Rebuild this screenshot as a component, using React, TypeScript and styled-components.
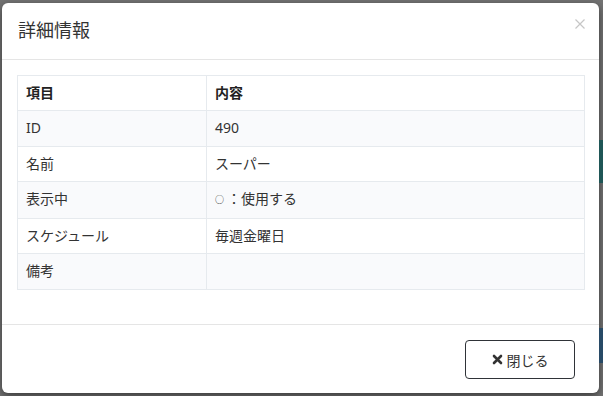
import styled, { createGlobalStyle } from 'styled-components'

const GlobalStyle = createGlobalStyle`
  html, body {
    margin: 0;
    padding: 0;
    background: #737373;
  }
  body {
    font-family: 'Noto Sans', 'Noto Sans CJK JP', sans-serif;
    font-size: 14px;
    color: #333;
  }
`

const Backdrop = styled.div`
  display: flex;
  width: 603px;
  height: 396px;
  padding: 3px 0 3px 2px;
  box-sizing: border-box;
  overflow: hidden;
`

const Modal = styled.div`
  display: flex;
  flex-direction: column;
  width: 597px;
  height: 390px;
  background: #fff;
  border-radius: 6px;
  box-shadow: 0 3px 9px rgba(0, 0, 0, 0.5);
  flex-shrink: 0;
`

const Behind = styled.div`
  display: flex;
  flex-direction: column;
  flex: 1;
`

const Strip = styled.div<{ $top: number; $height: number; $color: string }>`
  margin-top: ${(p) => p.$top}px;
  height: ${(p) => p.$height}px;
  background: ${(p) => p.$color};
`

const Header = styled.div`
  display: flex;
  align-items: flex-start;
  justify-content: space-between;
  padding: 15px 13px 15px 16px;
  border-bottom: 1px solid #e5e5e5;
`

const Title = styled.h4`
  margin: 0;
  font-size: 18px;
  font-weight: 400;
  line-height: 25.7px;
  color: #333;
`

const Close = styled.button`
  border: 0;
  background: none;
  padding: 0;
  margin-top: 0;
  line-height: 0;
  cursor: pointer;
`

const Body = styled.div`
  flex: 1;
  padding: 15px 14px 0 15px;
`

const Table = styled.table`
  width: 100%;
  border-collapse: collapse;
  border: 1px solid #e6eaee;
`

const Cell = styled.td<{ $head?: boolean }>`
  padding: 7px 8px 8px;
  line-height: 19.5px;
  border: 1px solid #e6eaee;
  font-weight: ${(p) => (p.$head ? 700 : 400)};
  color: ${(p) => (p.$head ? '#222' : '#333')};
  vertical-align: top;
  &:first-child {
    width: 172px;
  }
`

const Mark = styled.span`
  font-size: 9px;
  margin-right: 3px;
  vertical-align: 1px;
`

const Row = styled.tr<{ $striped?: boolean }>`
  background: ${(p) => (p.$striped ? '#f9fafc' : '#fff')};
`

const Footer = styled.div`
  display: flex;
  justify-content: flex-end;
  padding: 15px 24px 14px 15px;
  border-top: 1px solid #e5e5e5;
`

const Button = styled.button`
  display: flex;
  align-items: center;
  justify-content: center;
  gap: 4px;
  width: 110px;
  height: 39px;
  background: #fff;
  border: 1px solid #2f3338;
  border-radius: 4px;
  font-family: 'Noto Sans', 'Noto Sans CJK JP', sans-serif;
  font-size: 14px;
  color: #333;
  cursor: pointer;
`

const rows: [string, React.ReactNode][] = [
  ['ID', '490'],
  ['名前', 'スーパー'],
  [
    '表示中',
    <>
      <Mark>○</Mark>：使用する
    </>,
  ],
  ['スケジュール', '毎週金曜日'],
  ['備考', ''],
]

export default function App() {
  return (
    <>
      <GlobalStyle />
      <Backdrop>
        <Modal>
          <Header>
            <Title>詳細情報</Title>
            <Close aria-label='閉じる'>
              <svg width='12' height='12' viewBox='0 0 12 12'>
                <path d='M1.5 1.5 L10.5 10.5 M10.5 1.5 L1.5 10.5' stroke='#c6c6c6' strokeWidth='1.2' />
              </svg>
            </Close>
          </Header>
          <Body>
            <Table>
              <tbody>
                <Row>
                  <Cell $head>項目</Cell>
                  <Cell $head>内容</Cell>
                </Row>
                {rows.map(([k, v], i) => (
                  <Row key={k} $striped={i % 2 === 0}>
                    <Cell>{k}</Cell>
                    <Cell>{v}</Cell>
                  </Row>
                ))}
              </tbody>
            </Table>
          </Body>
          <Footer>
            <Button>
              <svg width='11' height='11' viewBox='0 0 11 11'>
                <path
                  d='M2 2 L9 9 M9 2 L2 9'
                  stroke='#333'
                  strokeWidth='2.6'
                  strokeLinecap='round'
                />
              </svg>
              閉じる
            </Button>
          </Footer>
        </Modal>
        <Behind>
          <Strip $top={137} $height={43} $color='#1f5656' />
          <Strip $top={145} $height={35} $color='#284a66' />
        </Behind>
      </Backdrop>
    </>
  )
}
